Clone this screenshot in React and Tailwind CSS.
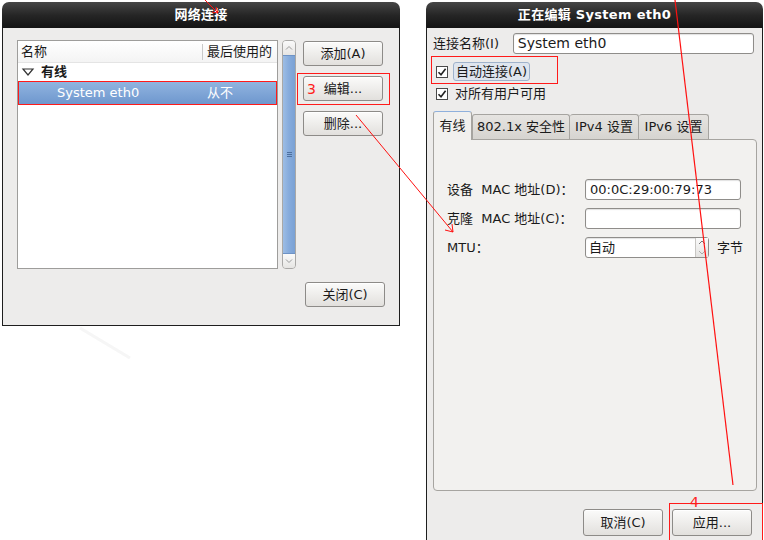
import React from "react";

const FONT = { fontFamily: '"DejaVu Sans", "Noto Sans CJK SC", sans-serif' };

function Btn({ children, className = "" }) {
  return (
    <div
      className={
        "flex items-center justify-center w-[80px] h-[25px] rounded-[3px] border border-[#8d8b88] bg-gradient-to-b from-[#fbfbfa] to-[#e2e0dd] text-[13px] text-[#1a1a1a] shadow-[inset_0_1px_0_#fff] " +
        className
      }
    >
      {children}
    </div>
  );
}

function TitleBar({ children }) {
  return (
    <div className="h-[26px] shrink-0 rounded-t-[7px] bg-gradient-to-b from-[#474747] via-[#262626] to-[#141414] flex items-center justify-center text-white font-bold text-[13px] tracking-[0.3px]">
      {children}
    </div>
  );
}

function Check() {
  return (
    <div className="w-[12px] h-[12px] border border-[#4a4a4a] bg-white flex items-center justify-center">
      <svg width="10" height="10" viewBox="0 0 10 10">
        <path d="M1.5 5.2 L4 7.8 L8.6 1.8" fill="none" stroke="#222" strokeWidth="1.6" />
      </svg>
    </div>
  );
}

function Input({ value = "", className = "" }) {
  return (
    <div
      className={
        "h-[21px] rounded-[3px] border border-[#8f8d8a] bg-white flex items-center px-[4px] text-[13px] text-[#1a1a1a] shadow-[inset_0_1px_1px_rgba(0,0,0,0.12)] " +
        className
      }
    >
      {value}
    </div>
  );
}

function LeftDialog() {
  return (
    <div className="w-[398px] h-[324px] flex flex-col">
      <TitleBar>网络连接</TitleBar>
      <div className="flex-1 bg-[#edeceb] border border-t-0 border-[#1e1e1e] pl-[14px] pt-[12px] flex flex-col">
        <div className="flex">
          {/* list */}
          <div className="w-[261px] h-[229px] border border-[#9e9d9b] bg-white flex flex-col text-[13px] text-[#1a1a1a]">
            <div className="h-[22px] flex items-center border-b border-[#e4e4e4] bg-gradient-to-b from-[#ffffff] to-[#f4f4f4]">
              <div className="w-[184px] pl-[3px]">名称</div>
              <div className="h-[16px] border-l border-[#c9c9c9] pl-[4px] flex items-center">最后使用的</div>
            </div>
            <div className="h-[18px] flex items-center pl-[3px] font-bold">
              <svg width="14" height="10" viewBox="0 0 14 10" className="mr-[6px]">
                <path d="M2 2 L12 2 L7 8 Z" fill="none" stroke="#333" strokeWidth="1.2" />
              </svg>
              有线
            </div>
            <div className="relative h-[24px] flex items-center bg-gradient-to-b from-[#92b5e0] to-[#6d96cd] text-white">
              <div className="w-[189px] pl-[39px]">System eth0</div>
              <div>从不</div>
              <div className="absolute inset-0 border border-[#ff1a1a]" />
            </div>
          </div>
          {/* scrollbar */}
          <div className="ml-[4px] w-[14px] h-[229px] rounded-[4px] border border-[#a9a8a6] bg-[#e8e7e5] flex flex-col items-center overflow-hidden">
            <div className="h-[14px] w-full flex items-center justify-center bg-gradient-to-b from-[#fafafa] to-[#e6e5e3]">
              <svg width="8" height="6" viewBox="0 0 8 6"><path d="M1 4.5 L4 1.5 L7 4.5" fill="none" stroke="#9a9a9a" strokeWidth="1" /></svg>
            </div>
            <div className="flex-1 w-full bg-gradient-to-r from-[#9dbde4] via-[#86abdc] to-[#7aa1d4] border-y border-[#6e93c6] flex items-center justify-center">
              <div className="flex flex-col gap-[1px]">
                <div className="w-[5px] h-[1px] bg-[#4d6f9e]" />
                <div className="w-[5px] h-[1px] bg-[#4d6f9e]" />
                <div className="w-[5px] h-[1px] bg-[#4d6f9e]" />
              </div>
            </div>
            <div className="h-[14px] w-full flex items-center justify-center bg-gradient-to-b from-[#fafafa] to-[#e6e5e3]">
              <svg width="8" height="6" viewBox="0 0 8 6"><path d="M1 1.5 L4 4.5 L7 1.5" fill="none" stroke="#9a9a9a" strokeWidth="1" /></svg>
            </div>
          </div>
          {/* buttons */}
          <div className="ml-[7px] pt-[1px] flex flex-col gap-[10px]">
            <Btn>添加(A)</Btn>
            <div className="relative">
              <Btn>编辑...</Btn>
              <span className="absolute left-[4px] top-[3px] text-[14px] text-[#ff2020]">3</span>
              <div className="absolute left-[-6px] top-[-3px] w-[93px] h-[32px] border border-[#ff1a1a]" />
            </div>
            <Btn>删除...</Btn>
          </div>
        </div>
        <div className="flex justify-end pr-[14px] mt-[13px]">
          <Btn>关闭(C)</Btn>
        </div>
      </div>
    </div>
  );
}

function RightDialog() {
  return (
    <div className="w-[337px] h-[538px] flex flex-col">
      <TitleBar>正在编辑 System eth0</TitleBar>
      <div className="flex-1 bg-[#edeceb] border-l border-r border-[#1e1e1e] pl-[6px] pr-[8px] pt-[5px] flex flex-col text-[13px] text-[#1a1a1a]">
        <div className="flex items-center">
          <div className="w-[80px]">连接名称(I)</div>
          <Input value="System eth0" className="w-[242px] text-[14px]" />
        </div>
        <div className="relative mt-[8px] h-[19px] flex items-center pl-[3px]">
          <Check />
          <div className="ml-[5px] h-[19px] px-[2px] flex items-center rounded-[3px] border border-[#9fb2cb] bg-[#dfe5ee]">
            自动连接(A)
          </div>
          <div className="absolute left-[-2px] top-[-6px] w-[127px] h-[28px] border border-[#ff1a1a]" />
        </div>
        <div className="mt-[3px] h-[19px] flex items-center pl-[3px]">
          <Check />
          <div className="ml-[7px]">对所有用户可用</div>
        </div>
        {/* tabs */}
        <div className="mt-[8px] flex items-end h-[28px]">
          <div className="w-[39px] h-[29px] rounded-t-[3px] border border-b-0 border-[#a6a4a0] border-t-[#8fb0dc] bg-[#f1f0ee] flex items-center justify-center relative z-10 mb-[-1px]">
            有线
          </div>
          <div className="w-[98px] h-[25px] rounded-t-[3px] border border-b-0 border-[#a6a4a0] bg-gradient-to-b from-[#e6e4e1] to-[#d6d4d0] flex items-center justify-center">
            802.1x 安全性
          </div>
          <div className="w-[69px] h-[25px] rounded-t-[3px] border border-b-0 border-l-0 border-[#a6a4a0] bg-gradient-to-b from-[#e6e4e1] to-[#d6d4d0] flex items-center justify-center">
            IPv4 设置
          </div>
          <div className="w-[70px] h-[25px] rounded-t-[3px] border border-b-0 border-l-0 border-[#a6a4a0] bg-gradient-to-b from-[#e6e4e1] to-[#d6d4d0] flex items-center justify-center">
            IPv6 设置
          </div>
        </div>
        <div className="w-[324px] h-[352px] rounded-b-[4px] rounded-tr-[4px] border border-[#a6a4a0] bg-[#f2f1ef] pl-[13px] pt-[39px] flex flex-col gap-[8px]">
          <div className="flex items-center">
            <div className="w-[138px]">设备&nbsp; MAC 地址(D)：</div>
            <Input value="00:0C:29:00:79:73" className="w-[156px]" />
          </div>
          <div className="flex items-center">
            <div className="w-[138px]">克隆&nbsp; MAC 地址(C)：</div>
            <Input className="w-[156px]" />
          </div>
          <div className="flex items-center">
            <div className="w-[138px]">MTU：</div>
            <div className="w-[124px] h-[21px] rounded-[3px] border border-[#8f8d8a] bg-white flex items-center shadow-[inset_0_1px_1px_rgba(0,0,0,0.12)]">
              <div className="flex-1 px-[3px]">自动</div>
              <div className="w-[13px] h-full border-l border-[#c8c6c3] flex flex-col bg-gradient-to-b from-[#fafafa] to-[#e4e3e1]">
                <div className="flex-1 flex items-center justify-center">
                  <svg width="8" height="5" viewBox="0 0 8 5"><path d="M1 4 L4 1 L7 4" fill="none" stroke="#777" strokeWidth="1" /></svg>
                </div>
                <div className="flex-1 flex items-center justify-center">
                  <svg width="8" height="5" viewBox="0 0 8 5"><path d="M1 1 L4 4 L7 1" fill="none" stroke="#aaa" strokeWidth="1" /></svg>
                </div>
              </div>
            </div>
            <div className="ml-[8px]">字节</div>
          </div>
        </div>
        <div className="flex justify-end gap-[9px] mt-[18px] pr-[2px]">
          <Btn className="h-[27px]">取消(C)</Btn>
          <div className="relative">
            <Btn className="h-[27px]">应用...</Btn>
            <span className="absolute left-[18px] top-[-17px] text-[14px] text-[#ff2020]">4</span>
            <div className="absolute left-[-3px] top-[-6px] w-[94px] h-[40px] border border-[#ff1a1a]" />
          </div>
        </div>
      </div>
    </div>
  );
}

export default function App() {
  return (
    <div className="relative w-[764px] h-[540px] bg-white overflow-hidden" style={FONT}>
      <div className="flex items-start pt-[2px] pl-[2px]">
        <LeftDialog />
        <div className="ml-[26px]">
          <RightDialog />
        </div>
      </div>
      <svg className="absolute inset-0 pointer-events-none" width="764" height="540" viewBox="0 0 764 540">
        <line x1="80" y1="328" x2="130" y2="358" stroke="#f6f6f6" strokeWidth="3" />
        <line x1="205" y1="0" x2="218" y2="13" stroke="#ff1010" strokeWidth="1" />
        <path d="M212 12 L218 13 L216 7" fill="none" stroke="#ff1010" strokeWidth="1" />
        <line x1="356" y1="115" x2="453" y2="232" stroke="#ff1010" strokeWidth="1" />
        <path d="M445 230 L453 232 L452 224" fill="none" stroke="#ff1010" strokeWidth="1" />
        <line x1="675" y1="0" x2="733" y2="485" stroke="#ff1010" strokeWidth="1.2" />
      </svg>
    </div>
  );
}
